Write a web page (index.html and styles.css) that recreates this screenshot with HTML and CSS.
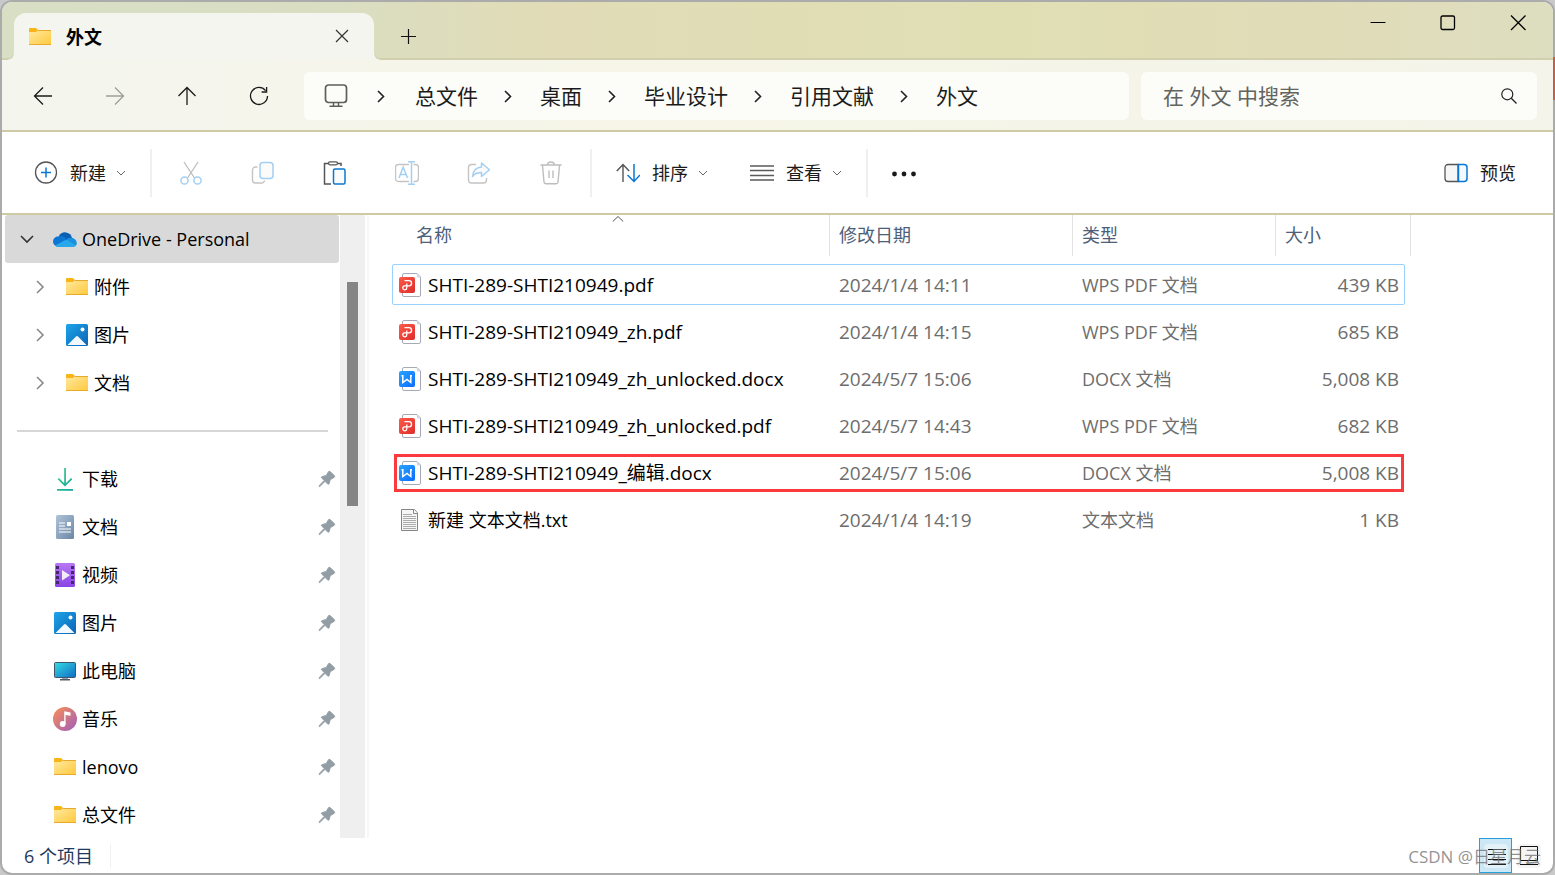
FILE: index.html
```html
<!DOCTYPE html>
<html lang="zh-CN">
<head>
<meta charset="utf-8">
<meta name="viewport" content="width=device-width, initial-scale=1">
<title>外文</title>
<link rel="stylesheet" href="styles.css">
</head>
<body>
<svg class="defs" aria-hidden="true">
  <defs>
    <linearGradient id="g-folder" x1="0" y1="0" x2="1" y2="1"><stop offset="0" stop-color="#ffe9a0"/><stop offset="1" stop-color="#ffc93c"/></linearGradient>
    <linearGradient id="g-pic" x1="0" y1="0" x2="1" y2="1"><stop offset="0" stop-color="#1ea4ea"/><stop offset="1" stop-color="#0b64b4"/></linearGradient>
    <linearGradient id="g-doc" x1="0" y1="0" x2="1" y2="1"><stop offset="0" stop-color="#b0c4d8"/><stop offset="1" stop-color="#6a86a6"/></linearGradient>
    <linearGradient id="g-video" x1="0" y1="0" x2="0" y2="1"><stop offset="0" stop-color="#b878f4"/><stop offset="1" stop-color="#8a44e4"/></linearGradient>
    <linearGradient id="g-pc" x1="0" y1="0" x2="1" y2="1"><stop offset="0" stop-color="#36dbe4"/><stop offset="1" stop-color="#0f6cc4"/></linearGradient>
    <linearGradient id="g-music" x1="0" y1="0" x2="1" y2="1"><stop offset="0.1" stop-color="#f28a5c"/><stop offset="0.9" stop-color="#a962b4"/></linearGradient>
    <linearGradient id="g-down" x1="0" y1="0" x2="1" y2="1"><stop offset="0" stop-color="#3ccb80"/><stop offset="1" stop-color="#10a4a4"/></linearGradient>
    <linearGradient id="g-pdf" x1="0" y1="0" x2="1" y2="1"><stop offset="0" stop-color="#ff5c48"/><stop offset="1" stop-color="#dc2c2c"/></linearGradient>
    <linearGradient id="g-word" x1="0" y1="0" x2="1" y2="1"><stop offset="0" stop-color="#28a4ff"/><stop offset="1" stop-color="#0c6cff"/></linearGradient>
  </defs>
  <symbol id="folder" viewBox="0 0 24 24">
    <path d="M1 4a1 1 0 0 1 1-1h6l1.500 1.500V8H1z" fill="#f9b417"/>
    <path d="M1 7h7l2-2h13v15H1z" fill="url(#g-folder)"/>
    <path d="M9.500 5.500H23" stroke="#e9a92a"/><path d="M1 19.500h22" stroke="#e9a92a"/>
  </symbol>
  <symbol id="picture" viewBox="0 0 24 24">
    <rect x="1" y="1" width="22" height="22" rx="1.500" fill="url(#g-pic)"/>
    <circle cx="17.500" cy="6.500" r="2" fill="#fff"/>
    <path d="M2.500 22 11 13.600a1.400 1.400 0 0 1 2 0L21.500 22z" fill="#f2f8ff"/>
  </symbol>
  <symbol id="cloud" viewBox="0 0 24 24">
    <path d="M6 9a7 7 0 0 1 13 2l-6 4-8-3z" fill="#0a5fb4"/>
    <path d="M5 9.500c2-1 5-.5 7 1l4 3-5 6H5a5 5 0 0 1 0-10z" fill="#0d76d4"/>
    <path d="M14 12c1.500-1.500 5.500-2 7.500 0 2.200 1.500 3 4.500 1.500 6.500l-9-3z" fill="#1890e0"/>
    <path d="M2 18.500 12 13.300c1-.5 2-.3 3 .3l8 4.900c-.8 1-1.800 1.500-3.200 1.500H5.500c-1.500 0-2.700-.5-3.500-1.500z" fill="#28a8ea"/>
  </symbol>
  <symbol id="download" viewBox="0 0 24 24">
    <path d="M11.200 1h1.700v15.300l5.200-5.200 1.200 1.200-7.300 7.300-7.300-7.300 1.200-1.200 5.300 5.200zM4 22h16v1.800H4z" fill="url(#g-down)"/>
  </symbol>
  <symbol id="document" viewBox="0 0 24 24">
    <rect x="3" y="0" width="18" height="24" rx="1.500" fill="url(#g-doc)"/>
    <path d="M6 8h6M6 11h6M6 14h12M6 17h12" stroke="#fff" stroke-width="1.200"/><path d="M14 7h4v4h-4z" fill="#fff"/>
  </symbol>
  <symbol id="video" viewBox="0 0 24 24">
    <rect x="2" y="0" width="20" height="24" rx="1.500" fill="url(#g-video)"/>
    <path d="M3 3h3v3H3zM3 8h3v3H3zM3 13h3v3H3zM3 18h3v3H3zM18 3h3v3h-3zM18 8h3v3h-3zM18 13h3v3h-3zM18 18h3v3h-3z" fill="#42286c"/>
    <path d="M9 7v10.500l8-5.250z" fill="#f3edf8"/>
  </symbol>
  <symbol id="pc" viewBox="0 0 24 24">
    <path d="M9 17h6v3H9z" fill="#9aa7b2"/><path d="M7 20h10v1.500H7z" fill="#4c5864"/>
    <rect x="1.500" y="3.500" width="21" height="15" rx="1" fill="url(#g-pc)" stroke="#3f5668"/>
  </symbol>
  <symbol id="music" viewBox="0 0 24 24">
    <circle cx="12" cy="12" r="12" fill="url(#g-music)"/>
    <circle cx="9.700" cy="17" r="2.900" fill="#fff"/><path d="M11.200 17V4.300L17.500 5.500v3.300l-4.900-.8v9z" fill="#fff"/>
  </symbol>
  <symbol id="pin" viewBox="0 0 18 18">
    <path d="M10.500 1.700c.6-.6 1.300-.5 1.800 0l3.900 3.900c.6.600.5 1.300-.1 1.800l-3.900 2.200-1 3.900c-.2.800-1 1-1.600.4L7 11.300 2.200 16.100l-1.100.4.400-1.200L6.200 10.500 3.800 8c-.5-.5-.4-1.200.4-1.400l4.100-1z" fill="#929da5" stroke="#929da5"/>
  </symbol>
  <symbol id="down" viewBox="0 0 10 10"><path d="m1 3 4 4 4-4" fill="none" stroke="currentColor"/></symbol>
  <symbol id="expand" viewBox="0 0 14 14"><path d="m4 1 6 6-6 6" fill="none" stroke="#8a8a8a" stroke-width="1.600"/></symbol>
  <symbol id="crumb" viewBox="0 0 14 14"><path d="m4 2 5.500 5.500L4 13" fill="none" stroke="#222" stroke-width="1.600"/></symbol>
  <symbol id="pdf" viewBox="0 0 24 24">
    <path d="M4.500 2A1.500 1.500 0 0 1 6 .5h13L22.500 4v18a1.500 1.500 0 0 1-1.500 1.500H6A1.500 1.500 0 0 1 4.500 22z" fill="#fff" stroke="#a6a9b8"/>
    <path d="M18.500.5 22.500 4.500h-3.300z" fill="#d4d7df"/>
    <rect x="1" y="4" width="16" height="16" rx="2" fill="url(#g-pdf)"/>
    <path d="M6.500 7.700H11a2.500 2.500 0 0 1 0 5.100H6.500a2 2 0 1 0 2.300 2v-4.300" fill="none" stroke="#fff" stroke-width="1.300"/>
  </symbol>
  <symbol id="word" viewBox="0 0 24 24">
    <path d="M4.500 2A1.500 1.500 0 0 1 6 .5h13L22.500 4v18a1.500 1.500 0 0 1-1.500 1.500H6A1.500 1.500 0 0 1 4.500 22z" fill="#fff" stroke="#a6a9b8"/>
    <path d="M18.500.5 22.500 4.500h-3.300z" fill="#d4d7df"/>
    <rect x="1" y="4" width="16" height="16" rx="2" fill="url(#g-word)"/>
    <path d="M3.500 8.700h1.300v6.800L9 12.500l3.800 3V8.700H14" fill="none" stroke="#fff" stroke-width="1.500"/>
  </symbol>
  <symbol id="text" viewBox="0 0 24 24">
    <path d="M3.500 1.500h13l3 3.500v17.500h-16z" fill="#f6f6f6" stroke="#858585"/><path d="M15.500 1.500v4h4" fill="#fff" stroke="#858585"/>
    <path d="M5 6.500h9M5 8.500h13M5 10.500h13M5 12.500h13M5 14.500h13M5 16.500h13M5 18.500h13M5 20.500h13" stroke="#ababab"/>
  </symbol>
</svg>

<div class="window">
  <header class="titlebar">
    <div class="tab">
      <svg class="icon"><use href="#folder"/></svg>
      <span class="tab-title">外文</span>
      <button class="plain" aria-label="关闭标签页"><svg class="icon-s" viewBox="0 0 16 16"><path d="m2 1 12 12M14 1 2 13" stroke="#333" stroke-width="1.200"/></svg></button>
    </div>
    <button class="plain new-tab" aria-label="新标签页"><svg class="icon-s" viewBox="0 0 16 16"><path d="M8.500 0v15M1 7.500h15" stroke="#111" stroke-width="1.200"/></svg></button>
    <div class="caption">
      <button class="plain" aria-label="最小化"><svg class="icon-s" viewBox="0 0 16 16"><path d="M.5 7.500h15" stroke="#000"/></svg></button>
      <button class="plain" aria-label="最大化"><svg class="icon-s" viewBox="0 0 16 16"><rect x="1" y="1" width="13.500" height="13.500" rx="1.500" fill="none" stroke="#000" stroke-width="1.300"/></svg></button>
      <button class="plain" aria-label="关闭"><svg class="icon-s" viewBox="0 0 16 16"><path d="m1 .5 14.500 14.500M15.500.5 1 15" stroke="#000" stroke-width="1.300"/></svg></button>
    </div>
  </header>

  <nav class="navbar" aria-label="导航">
    <div class="nav-buttons">
      <button class="plain" aria-label="后退"><svg class="icon-m" viewBox="0 0 20 20"><path d="M10 1.500 1.500 10l8.500 8.500M1.500 10H19" fill="none" stroke="#1b1b1b" stroke-width="1.300"/></svg></button>
      <button class="plain" aria-label="前进" disabled><svg class="icon-m" viewBox="0 0 20 20"><path d="M10 1.500 18.500 10 10 18.500M18.500 10H1" fill="none" stroke="#9d9e99" stroke-width="1.300"/></svg></button>
      <button class="plain" aria-label="向上"><svg class="icon-m" viewBox="0 0 20 20"><path d="M1.500 10 10 1.500l8.500 8.500M10 1.500V19" fill="none" stroke="#1b1b1b" stroke-width="1.300"/></svg></button>
      <button class="plain" aria-label="刷新"><svg class="icon-m" viewBox="0 0 20 20"><path d="M18.500 10A8.500 8.500 0 1 1 16.600 4.600M17.600 1v5h-5" fill="none" stroke="#1b1b1b" stroke-width="1.300"/></svg></button>
    </div>
    <div class="address">
      <svg class="icon" viewBox="0 0 24 24"><rect x="1.500" y="1" width="21" height="17.500" rx="3" fill="none" stroke="#5e5e5b" stroke-width="1.700"/><path d="M9.500 18v4M14.500 18v4M5.500 22.200h13" stroke="#5e5e5b" stroke-width="1.500"/></svg>
      <svg class="crumb"><use href="#crumb"/></svg><a href="#">总文件</a>
      <svg class="crumb"><use href="#crumb"/></svg><a href="#">桌面</a>
      <svg class="crumb"><use href="#crumb"/></svg><a href="#">毕业设计</a>
      <svg class="crumb"><use href="#crumb"/></svg><a href="#">引用文献</a>
      <svg class="crumb"><use href="#crumb"/></svg><a href="#">外文</a>
    </div>
    <div class="search">
      <input type="search" aria-label="搜索" placeholder="在 外文 中搜索">
      <svg class="icon-s" viewBox="0 0 16 16"><circle cx="6.300" cy="6.300" r="5.500" fill="none" stroke="#222" stroke-width="1.200"/><path d="m10.300 10.300 5.200 5.200" stroke="#222" stroke-width="1.300"/></svg>
    </div>
  </nav>

  <div class="toolbar">
    <button class="tool"><svg class="icon" viewBox="0 0 24 24"><circle cx="12" cy="11.500" r="10.500" fill="none" stroke="#555" stroke-width="1.300"/><path d="M12 6.500v10M7 11.500h10" stroke="#0a78d2" stroke-width="1.500"/></svg><span>新建</span><svg class="chev"><use href="#down"/></svg></button>
    <span class="rule"></span>
    <div class="actions">
      <button class="plain" aria-label="剪切" disabled><svg class="icon" viewBox="0 0 24 24"><path d="M5 1l10.500 16M19 1 8.500 17" stroke="#bdbdbd" stroke-width="1.300"/><g fill="none" stroke="#a2cff2" stroke-width="1.500"><circle cx="5.500" cy="19.500" r="3.600"/><circle cx="18.500" cy="19.500" r="3.600"/></g></svg></button>
      <button class="plain" aria-label="复制" disabled><svg class="icon" viewBox="0 0 24 24"><path d="M6.500 6H4.500a3 3 0 0 0-3 3v10a3 3 0 0 0 3 3h6a3 3 0 0 0 3-2.500" fill="none" stroke="#c4c4c4" stroke-width="1.400"/><rect x="9" y="1.500" width="13" height="16" rx="3" fill="#fbfbfb" stroke="#a2cff2" stroke-width="1.500"/></svg></button>
      <button class="plain" aria-label="粘贴"><svg class="icon" viewBox="0 0 24 24"><path d="M7 2.500H1.500V23H8M14.500 2.500H18V5" fill="none" stroke="#555" stroke-width="1.500"/><rect x="5.500" y=".8" width="9" height="3" rx="1.500" fill="#fff" stroke="#555" stroke-width="1.300"/><rect x="10.500" y="8" width="11.500" height="15" rx="1.500" fill="#fbfbfb" stroke="#0a78d2" stroke-width="1.500"/></svg></button>
      <button class="plain" aria-label="重命名" disabled><svg class="icon" viewBox="0 0 24 24"><path d="M14 3.500H3.500a3 3 0 0 0-3 3v11a3 3 0 0 0 3 3H14M18.500 3.500h2a3 3 0 0 1 3 3v11a3 3 0 0 1-3 3h-2" fill="none" stroke="#c4c4c4" stroke-width="1.400"/><path d="m4 17 4.200-11L12.500 17M5.500 13.500H11M16.500 1v22M13 .8h7M13 23.200h7" fill="none" stroke="#a2cff2" stroke-width="1.500"/></svg></button>
      <button class="plain" aria-label="共享" disabled><svg class="icon" viewBox="0 0 24 24"><path d="M9 3.500H4.500a3 3 0 0 0-3 3V19a3 3 0 0 0 3 3h12a3 3 0 0 0 3-3v-2" fill="none" stroke="#c4c4c4" stroke-width="1.400"/><path d="M14.500 2 22.500 8.800l-8 6.700v-4c-4 0-7 1-9 4 .5-5.500 4-9 9-9.500z" fill="#fbfbfb" stroke="#a2cff2" stroke-width="1.500" stroke-linejoin="round"/></svg></button>
      <button class="plain" aria-label="删除" disabled><svg class="icon" viewBox="0 0 24 24"><path d="M1.500 4h21M8.500 4a3.500 3 0 0 1 7 0M3.500 4.500 5 21a2 2 0 0 0 2 1.800h10a2 2 0 0 0 2-1.800l1.500-16.500M10 9.500V17M14 9.500V17" fill="none" stroke="#bdbdbd" stroke-width="1.400"/></svg></button>
    </div>
    <span class="rule"></span>
    <button class="tool"><svg class="icon" viewBox="0 0 24 24"><path d="M7 21V3.500M.8 10 7 3.500l6.200 6.500" fill="none" stroke="#555" stroke-width="1.400"/><path d="M18 3v17.500M11.500 14l6.500 6.500 6-6.500" fill="none" stroke="#0a78d2" stroke-width="1.500"/></svg><span>排序</span><svg class="chev"><use href="#down"/></svg></button>
    <button class="tool view"><svg class="icon" viewBox="0 0 24 24"><path d="M0 5h24M0 9.500h24M0 14.500h24M0 19h24" stroke="#5a5a5a" stroke-width="1.500"/></svg><span>查看</span><svg class="chev"><use href="#down"/></svg></button>
    <span class="rule"></span>
    <button class="plain more" aria-label="查看更多"><svg class="icon" viewBox="0 0 24 24"><g fill="#1b1b1b"><circle cx="2.500" cy="13" r="2.400"/><circle cx="12" cy="13" r="2.400"/><circle cx="21.500" cy="13" r="2.400"/></g></svg></button>
    <button class="tool preview"><svg class="icon" viewBox="0 0 24 24"><path d="M14 3.500H4a3 3 0 0 0-3 3v11a3 3 0 0 0 3 3h10z" fill="#f7f7f7" stroke="#555" stroke-width="1.300"/><path d="M14.500 3.500H20a3 3 0 0 1 3 3v11a3 3 0 0 1-3 3h-5.500z" fill="#f4faff" stroke="#0a78d2" stroke-width="1.500"/></svg><span>预览</span></button>
  </div>

  <div class="main">
    <aside class="sidebar">
      <ul class="tree">
        <li class="root"><svg class="twist" viewBox="0 0 14 14"><path d="m1 4 6 6 6-6" fill="none" stroke="#333" stroke-width="1.600"/></svg><svg class="icon"><use href="#cloud"/></svg><span>OneDrive - Personal</span></li>
        <li class="child"><svg class="twist"><use href="#expand"/></svg><svg class="icon"><use href="#folder"/></svg><span>附件</span></li>
        <li class="child"><svg class="twist"><use href="#expand"/></svg><svg class="icon"><use href="#picture"/></svg><span>图片</span></li>
        <li class="child"><svg class="twist"><use href="#expand"/></svg><svg class="icon"><use href="#folder"/></svg><span>文档</span></li>
      </ul>
      <hr>
      <ul class="tree">
        <li class="quick"><svg class="icon"><use href="#download"/></svg><span>下载</span><svg class="pin"><use href="#pin"/></svg></li>
        <li class="quick"><svg class="icon"><use href="#document"/></svg><span>文档</span><svg class="pin"><use href="#pin"/></svg></li>
        <li class="quick"><svg class="icon"><use href="#video"/></svg><span>视频</span><svg class="pin"><use href="#pin"/></svg></li>
        <li class="quick"><svg class="icon"><use href="#picture"/></svg><span>图片</span><svg class="pin"><use href="#pin"/></svg></li>
        <li class="quick"><svg class="icon"><use href="#pc"/></svg><span>此电脑</span><svg class="pin"><use href="#pin"/></svg></li>
        <li class="quick"><svg class="icon"><use href="#music"/></svg><span>音乐</span><svg class="pin"><use href="#pin"/></svg></li>
        <li class="quick"><svg class="icon"><use href="#folder"/></svg><span>lenovo</span><svg class="pin"><use href="#pin"/></svg></li>
        <li class="quick"><svg class="icon"><use href="#folder"/></svg><span>总文件</span><svg class="pin"><use href="#pin"/></svg></li>
      </ul>
    </aside>
    <div class="scrollbar"><div class="thumb"></div></div>
    <section class="files">
      <table>
        <colgroup><col class="c-name"><col class="c-date"><col class="c-type"><col class="c-size"></colgroup>
        <thead>
          <tr>
            <th aria-sort="ascending"><button class="head first">名称</button><svg class="sort" viewBox="0 0 12 6"><path d="m.8 5.500 5.200-5 5.200 5" fill="none" stroke="#555"/></svg></th>
            <th><button class="head">修改日期</button></th>
            <th><button class="head">类型</button></th>
            <th><button class="head">大小</button></th>
          </tr>
        </thead>
        <tbody>
          <tr class="focused"><td><div class="file"><svg class="icon"><use href="#pdf"/></svg>SHTI-289-SHTI210949.pdf</div></td><td>2024/1/4 14:11</td><td class="type">WPS PDF 文档</td><td>439 KB</td></tr>
          <tr><td><div class="file"><svg class="icon"><use href="#pdf"/></svg>SHTI-289-SHTI210949_zh.pdf</div></td><td>2024/1/4 14:15</td><td class="type">WPS PDF 文档</td><td>685 KB</td></tr>
          <tr><td><div class="file"><svg class="icon"><use href="#word"/></svg>SHTI-289-SHTI210949_zh_unlocked.docx</div></td><td>2024/5/7 15:06</td><td class="type">DOCX 文档</td><td>5,008 KB</td></tr>
          <tr><td><div class="file"><svg class="icon"><use href="#pdf"/></svg>SHTI-289-SHTI210949_zh_unlocked.pdf</div></td><td>2024/5/7 14:43</td><td class="type">WPS PDF 文档</td><td>682 KB</td></tr>
          <tr class="marked"><td><div class="file"><svg class="icon"><use href="#word"/></svg>SHTI-289-SHTI210949_编辑.docx</div></td><td>2024/5/7 15:06</td><td class="type">DOCX 文档</td><td>5,008 KB</td></tr>
          <tr><td><div class="file cjk"><svg class="icon"><use href="#text"/></svg>新建 文本文档.txt</div></td><td>2024/1/4 14:19</td><td class="type">文本文档</td><td>1 KB</td></tr>
        </tbody>
      </table>
    </section>
  </div>

  <footer class="statusbar">
    <span class="count">6 个项目</span>
    <div class="views">
      <button class="plain active" aria-label="详细信息"><svg class="icon" viewBox="0 0 24 24"><rect width="24" height="24" rx="4" fill="#e3f1f8"/><path d="M4 5.500h18M4 10.500h18M4 15.500h18M4 20.500h18" stroke="#111"/></svg></button>
      <button class="plain" aria-label="大图标"><svg class="icon" viewBox="0 0 24 24"><rect width="24" height="24" rx="4" fill="#f5f5f5"/><path d="M3.500 2.500h17v14h-17zM3 20.500h18" fill="none" stroke="#111"/></svg></button>
    </div>
  </footer>
  <span class="watermark">CSDN @日星月云</span>
</div>
</body>
</html>
```
FILE: styles.css
```css
* { box-sizing: border-box; }
body {
  position: relative;
  margin: 0;
  background: #c9c9c9;
  color: #000;
  font: 18px/24px "Open Sans", "Noto Sans CJK SC", sans-serif;
}
/* Sliver of the window behind, visible along the right edge */
body::after {
  content: "";
  position: absolute;
  top: 57px;
  right: 0;
  width: 2px;
  height: 43px;
  background: #c2604a;
}
button, input { font: inherit; color: inherit; }
svg { display: block; flex: none; }
.defs { position: absolute; width: 0; height: 0; }
.icon { width: 24px; height: 24px; }
.icon-m { width: 20px; height: 20px; }
.icon-s { width: 16px; height: 16px; }
.plain {
  display: flex;
  align-items: center;
  justify-content: center;
  padding: 0;
  border: 0;
  background: none;
}

.window {
  position: relative;
  display: flex;
  flex-direction: column;
  min-height: 100vh;
  border: 2px solid #ababab;
  border-radius: 12px;
  overflow: hidden;
  background: #fff;
}

.titlebar {
  display: flex;
  height: 58px;
  padding: 11px 0 0 12px;
  background: linear-gradient(90deg, #d8dfc4 0, #d9dec3 20%, #e1dcb7 35%, #e0dfb4 65%, #e1dcb8 85%, #dddec0 100%);
  box-shadow: inset 0 -2px #d2cfae;
}
.tab {
  position: relative;
  display: flex;
  align-items: center;
  width: 360px;
  padding: 0 24px 0 14px;
  border-radius: 12px 12px 0 0;
  background: #f4f5ee;
}
/* Flared feet where the tab joins the navigation bar */
.tab::before, .tab::after {
  content: "";
  position: absolute;
  bottom: 0;
  width: 6px;
  height: 6px;
}
.tab::before { left: -6px; background: radial-gradient(circle at 0 0, transparent 4px, #cdd0b2 5px, #f4f5ee 6px); }
.tab::after { right: -6px; background: radial-gradient(circle at 100% 0, transparent 4px, #cfceac 5px, #f4f5ee 6px); }
.tab-title { flex: 1; margin-left: 14px; font-weight: 700; }
.new-tab { width: 68px; }
.caption { display: flex; align-items: center; align-self: flex-start; height: 20px; margin-left: auto; }
.caption .plain { width: 70px; }

.navbar {
  display: flex;
  align-items: center;
  gap: 12px;
  height: 72px;
  padding: 2px 16px 0 5px;
  border-bottom: 2px solid #cdcaa4;
  background: linear-gradient(90deg, #f4f5ee, #f6f5e8 40%, #f4f5e8 70%, #f5f4ea);
}
.nav-buttons { display: flex; }
.nav-buttons .plain { width: 72px; height: 48px; }
.address, .search {
  display: flex;
  align-items: center;
  height: 48px;
  border-radius: 6px;
  background: #fcfdf8;
  font-size: 21px;
}
.address { flex: 1; margin-left: -3px; padding-left: 20px; }
.address a { color: #1b1b1b; text-decoration: none; white-space: nowrap; }
.crumb { width: 14px; height: 14px; margin: 0 25px 0 23px; }
.address .icon + .crumb { margin: 0 27px 0 26px; }
.search { width: 396px; padding: 0 20px 0 22px; }
.search input { flex: 1; min-width: 0; padding: 0; border: 0; outline: 0; background: none; }
.search input::placeholder { color: #636360; opacity: 1; }

.toolbar {
  display: flex;
  align-items: center;
  height: 83px;
  padding: 0 37px 0 32px;
  border-bottom: 2px solid #cdcaa4;
  color: #1b1b1b;
}
.tool {
  display: flex;
  align-items: center;
  gap: 12px;
  height: 48px;
  padding: 0;
  border: 0;
  background: none;
}
.chev { width: 10px; height: 10px; margin-left: -2px; color: #666; }
.rule { width: 2px; height: 48px; margin: 0 24px; background: #efefef; }
.actions { display: flex; margin: 0 -21px; }
.actions .plain { width: 72px; height: 48px; }
.view { margin-left: 42px; }
.preview { margin-left: auto; }

.main { display: flex; flex: 1; }
.sidebar { width: 338px; margin-bottom: -1px; padding: 0 1px 0 3px; }
.tree { margin: 0; padding: 0; list-style: none; }
.tree li { display: flex; align-items: center; gap: 5px; height: 48px; }
.twist { width: 14px; height: 14px; }
.root { padding-left: 15px; border-radius: 3px; background: #d9d9d9; }
.root .twist { margin-right: 14px; }
.child { padding-left: 28px; }
.child .twist { margin-right: 13px; }
.quick { padding: 0 3px 0 48px; }
.pin { width: 18px; height: 18px; margin-left: auto; }
.sidebar hr { height: 2px; margin: 23px 11px 23px 12px; border: 0; background: #d6d6d6; }
.scrollbar { width: 25px; padding: 67px 7px 0; background: #efefef; }
.thumb { height: 224px; background: #858585; }

.files { flex: 1; margin-left: 2px; padding-left: 23px; border-left: 2px solid #f7f7f7; }
table { table-layout: fixed; width: 1019px; border-spacing: 0; }
.c-name { width: 438px; }
.c-date { width: 243px; }
.c-type { width: 203px; }
.c-size { width: 135px; }
th { position: relative; height: 46px; padding: 0; vertical-align: top; font-weight: 400; }
.head {
  width: 100%;
  height: 41px;
  padding: 0 0 1px 9px;
  border: 0;
  border-right: 1px solid #e3e3e3;
  background: none;
  color: #4c607a;
  text-align: left;
}
.first { padding-left: 24px; }
.sort { position: absolute; top: 1px; left: 220px; width: 12px; height: 6px; }
tbody tr { position: relative; }
td { height: 47px; padding: 0 0 0 9px; color: #6d6d6d; font-size: 19px; white-space: nowrap; }
td:first-child { padding-left: 6px; color: #000; }
td:last-child { padding: 0 12px 0 0; text-align: right; }
.file { display: flex; align-items: center; gap: 6px; }
td.type, .cjk { font-size: 18px; }
.focused::after, .marked::after { content: ""; position: absolute; }
.focused::after { inset: 3px 6px 3px 0; border: 1px solid #99d1ff; border-radius: 2px; }
.marked::after { inset: 5px 7px 4px 2px; border: 3px solid #fc3a3d; }

.statusbar { display: flex; align-items: center; height: 35px; padding-left: 22px; color: #1e395b; }
.count { padding-right: 17px; border-right: 1px solid #f0f0f0; }
.views { display: flex; margin-left: auto; padding-right: 8px; }
.views .plain { width: 33px; height: 35px; }
.views .active { border: 1px solid #26a0da; background: #cce8f6; }
.watermark {
  position: absolute;
  right: 12px;
  bottom: 4px;
  color: rgba(110, 110, 110, 0.75);
  font-size: 17px;
}
```
